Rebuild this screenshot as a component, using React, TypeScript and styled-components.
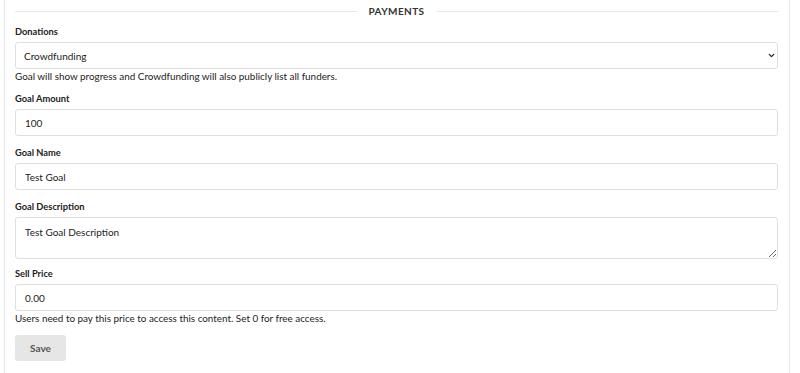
import styled, { createGlobalStyle } from "styled-components";
import { ChevronDown } from "lucide-react";

const GlobalStyle = createGlobalStyle`
    html, body {
        margin: 0;
        padding: 0;
        background: #ffffff;
    }
    body {
        font-family: Lato, "Open Sans", Arial, sans-serif;
        color: #222;
    }
`;

export default function App() {
    return (
        <>
            <GlobalStyle />
            <Panel>
                <SectionTitle>PAYMENTS</SectionTitle>

                <Field>
                    <Label>Donations</Label>
                    <SelectWrap>
                        <Select defaultValue="crowdfunding">
                            <option value="none">None</option>
                            <option value="goal">Goal</option>
                            <option value="crowdfunding">Crowdfunding</option>
                        </Select>
                        <Chevron size={9} strokeWidth={3.5} />
                    </SelectWrap>
                    <Help>Goal will show progress and Crowdfunding will also publicly list all funders.</Help>
                </Field>

                <Field>
                    <Label>Goal Amount</Label>
                    <Input defaultValue="100" />
                </Field>

                <Field>
                    <Label>Goal Name</Label>
                    <Input defaultValue="Test Goal" />
                </Field>

                <Field>
                    <Label>Goal Description</Label>
                    <TextArea defaultValue="Test Goal Description" />
                </Field>

                <Field $tight>
                    <Label>Sell Price</Label>
                    <Input defaultValue="0.00" />
                    <Help>Users need to pay this price to access this content. Set 0 for free access.</Help>
                </Field>

                <SaveButton>Save</SaveButton>

                <SectionTitle>MORE</SectionTitle>
            </Panel>
        </>
    );
}

const Panel = styled.div`
    margin-left: 4px;
    width: 786px;
    box-sizing: border-box;
    border-left: 1px solid #e6e6e6;
    border-right: 1px solid #e6e6e6;
    padding: 5px 11px 20px 10px;
`;

const SectionTitle = styled.div`
    display: flex;
    align-items: center;
    gap: 12px;
    height: 12px;
    margin-bottom: 9px;
    font-size: 10px;
    font-weight: 700;
    letter-spacing: 0.4px;
    color: #333;

    &::before,
    &::after {
        content: "";
        flex: 1;
        height: 1px;
        background: #e8e8e8;
    }
`;

const Field = styled.div<{ $tight?: boolean }>`
    display: flex;
    flex-direction: column;
    margin-top: ${({ $tight }) => ($tight ? "-2px" : "0")};
    margin-bottom: 11px;
`;

const Label = styled.label`
    font-size: 9.3px;
    line-height: 12px;
    font-weight: 700;
    color: #222;
    margin-bottom: 4px;
`;

const controlBase = `
    box-sizing: border-box;
    width: 100%;
    border: 1px solid #dfdfdf;
    border-radius: 3px;
    background: #fff;
    font-family: Lato, "Open Sans", Arial, sans-serif;
    font-size: 10px;
    color: #222;
    padding: 0 9px;
    outline: none;
`;

const Input = styled.input`
    ${controlBase}
    height: 27px;
`;

const SelectWrap = styled.div`
    position: relative;
`;

const Select = styled.select`
    ${controlBase}
    height: 27px;
    appearance: none;
    -webkit-appearance: none;
    padding-left: 8px;
`;

const Chevron = styled(ChevronDown)`
    position: absolute;
    right: 2px;
    top: 9px;
    color: #222;
    pointer-events: none;
`;

const TextArea = styled.textarea`
    ${controlBase}
    height: 42px;
    padding: 8px 9px;
    resize: vertical;
    display: block;
`;

const Help = styled.div`
    margin-top: 1px;
    font-size: 9.9px;
    line-height: 12px;
    color: #222;
`;

const SaveButton = styled.button`
    display: block;
    width: 51px;
    height: 26px;
    margin-top: 1px;
    margin-bottom: 9px;
    border: none;
    border-radius: 3px;
    background: #e6e6e6;
    color: #555;
    font-family: Lato, "Open Sans", Arial, sans-serif;
    font-size: 10px;
    font-weight: 700;
`;
